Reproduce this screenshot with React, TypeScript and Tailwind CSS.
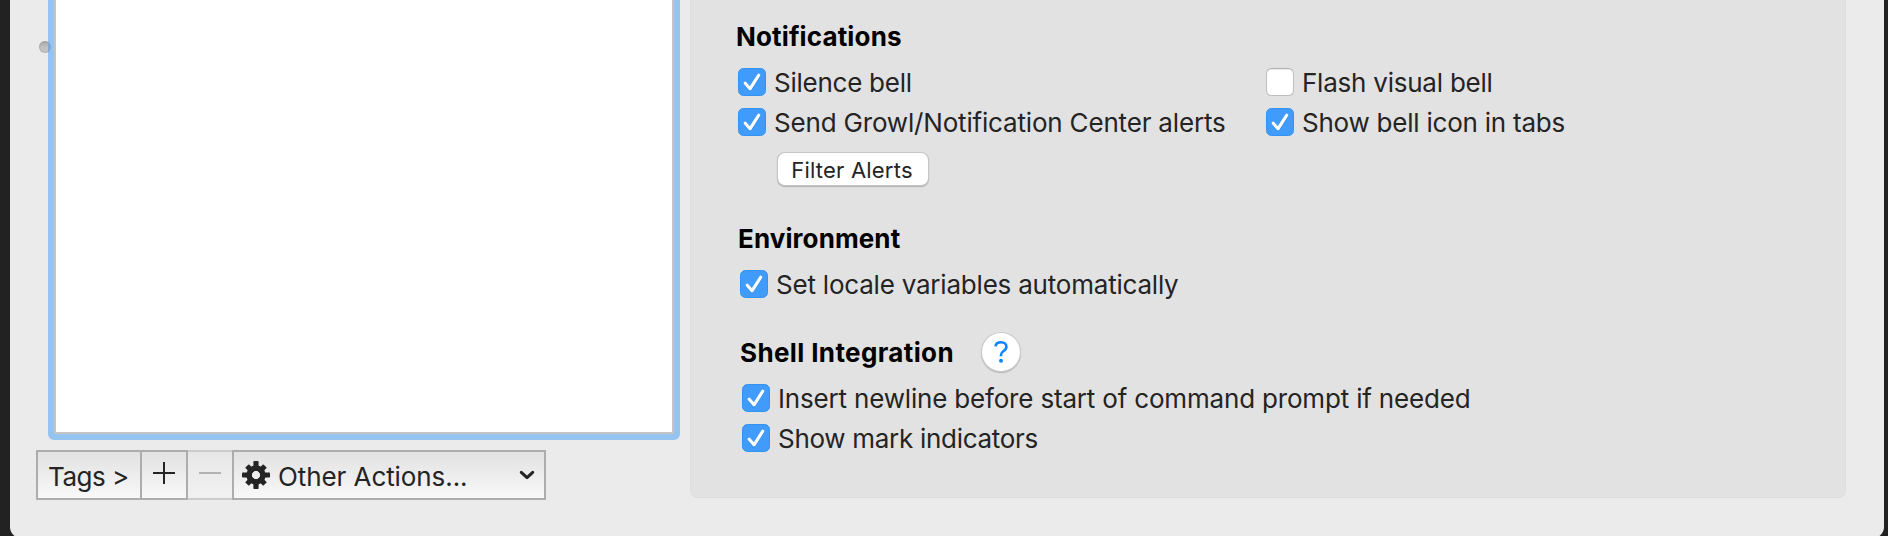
import React from "react";

type CheckProps = {
  label: string;
  tracking: string;
  checked?: boolean;
};

function Check({ label, tracking, checked = true }: CheckProps) {
  return (
    <label className="flex h-[28px] items-center">
      {checked ? (
        <span className="h-[28px] w-[28px] shrink-0 rounded-[5.5px] border border-[#3392f4] bg-[#409bfa]">
          <svg viewBox="1 1 26 26" className="h-[26px] w-[26px] overflow-visible" fill="none" strokeLinecap="round" strokeLinejoin="round">
            <path d="M7.2 16.4 12 22 20.8 8.4" stroke="#2f83dc" strokeOpacity="0.6" strokeWidth="2.8" />
            <path d="M7.2 15.2 12 20.8 20.8 7.2" stroke="#fff" strokeWidth="3.1" />
          </svg>
        </span>
      ) : (
        <span className="h-[28px] w-[28px] shrink-0 rounded-[5.5px] border border-[#bfbfbf] border-t-[#b0b0b0] bg-white shadow-[inset_0_1px_1px_rgba(0,0,0,0.08)]" />
      )}
      <span className={`ml-[8px] pt-px text-[26px] leading-[28px] whitespace-nowrap text-[#242424] ${tracking}`}>{label}</span>
    </label>
  );
}

function Gear() {
  return (
    <svg viewBox="-14 -14 28 28" className="h-[28px] w-[28px]" fill="#242424">
      <mask id="hub" maskUnits="userSpaceOnUse" x="-15" y="-15" width="30" height="30">
        <rect x="-15" y="-15" width="30" height="30" fill="#fff" />
        <circle r="4.3" fill="#000" />
      </mask>
      {[0, 45, 90, 135].map((a) => (
        <rect key={a} x="-2.6" y={a % 90 ? -12.8 : -14} width="5.2" height={a % 90 ? 25.6 : 28} rx="0.8" transform={`rotate(${a})`} mask="url(#hub)" />
      ))}
      <circle r="7" fill="none" stroke="#242424" strokeWidth="5.4" />
    </svg>
  );
}

export default function App() {
  return (
    <div className="h-[536px] w-full overflow-hidden bg-[#222222] pr-[4px] pl-[10px] font-['Inter',sans-serif]">
      <div className="flex h-[538px] rounded-b-[11px] bg-[#ebebeb]">
        <div className="w-[680px] shrink-0">
          <div className="relative ml-[38px] h-[440px] w-[632px] rounded-b-[6px] bg-[#96c4f1] px-[6px] pb-[6px]">
            <div className="h-full border-x-2 border-b-2 border-[#c4c4c4] bg-white" />
            <span className="absolute top-[41px] left-[-9px] flex h-[12px] w-[12px] justify-end overflow-hidden rounded-full bg-linear-to-b from-[#a6a6a6] via-[#c0c0c0] to-[#c6c6c6] shadow-[inset_0_0_1px_1px_rgba(140,140,140,0.35)]">
              <span className="h-full w-[3px] bg-[#7fa9d3]" />
            </span>
          </div>
          <div className="mt-[10px] ml-[26px] flex h-[50px] text-[26px] leading-[46px] text-[#242424]">
            <button className="w-[106px] border-2 border-[#adadad] bg-linear-to-b from-[#e2e2e2] to-[#f8f8f8] pt-[3px] pl-[10px] text-left leading-[43px] tracking-[-0.5px]">
              Tags &gt;
            </button>
            <button className="flex w-[46px] border-y-2 border-r-2 border-[#adadad] bg-linear-to-b from-[#e2e2e2] to-[#f8f8f8] pt-[10px] pl-[11px]">
              <svg viewBox="0 0 22 22" className="h-[22px] w-[22px]" stroke="#242424" strokeWidth="2">
                <path d="M11 0V22M0 11H22" />
              </svg>
            </button>
            <button className="flex w-[44px] border-y-2 border-[#cccccc] bg-linear-to-b from-[#e7e7e7] to-[#f1f1f1] pt-[10px] pl-[11px]">
              <svg viewBox="0 0 22 22" className="h-[22px] w-[22px]" stroke="#b2b2b2" strokeWidth="2">
                <path d="M0 11H22" />
              </svg>
            </button>
            <button className="flex w-[314px] items-center border-2 border-[#adadad] bg-linear-to-b from-[#e2e2e2] to-[#f8f8f8] pl-[8px]">
              <Gear />
              <span className="ml-[8px] pt-[4px] leading-[42px] tracking-[-0.08px]">Other Actions...</span>
              <svg viewBox="0 0 16 10" className="mr-[9px] ml-auto h-[10px] w-[16px]" fill="none" stroke="#242424" strokeWidth="3" strokeLinecap="round" strokeLinejoin="round">
                <path d="M2.3 2.3 8 7.7 13.7 2.3" />
              </svg>
            </button>
          </div>
        </div>

        <div className="h-[498px] w-[1156px] rounded-b-[8px] border-x border-b border-[#dddddd] bg-[#e2e2e2] pl-[45px]">
          <h2 className="mt-[22px] h-[28px] pt-px text-[26px] leading-[28px] font-bold tracking-[0.14px] text-black">Notifications</h2>
          <div className="mt-[18px] ml-[2px] grid w-[900px] grid-cols-[528px_1fr] gap-y-[12px]">
            <Check label="Silence bell" tracking="tracking-[-0.25px]" />
            <Check label="Flash visual bell" tracking="tracking-[-0.23px]" checked={false} />
            <Check label="Send Growl/Notification Center alerts" tracking="tracking-[-0.18px]" />
            <Check label="Show bell icon in tabs" tracking="tracking-[-0.23px]" />
          </div>
          <button className="mt-[17px] ml-[42px] block h-[32px] w-[150px] rounded-[7px] bg-white pr-[2px] text-[22px] leading-[35px] tracking-[0.2px] text-[#242424] shadow-[0_0_0_1px_#c6c6c6,0_1px_1px_1px_#b0b0b0]">
            Filter Alerts
          </button>
          <h2 className="mt-[39px] ml-[2px] h-[28px] pt-px text-[26px] leading-[28px] font-bold tracking-[0.1px] text-black">Environment</h2>
          <div className="mt-[18px] ml-[4px]">
            <Check label="Set locale variables automatically" tracking="tracking-[-0.21px]" />
          </div>
          <div className="mt-[34px] ml-[4px] flex h-[40px] items-center">
            <h2 className="pt-px text-[26px] leading-[28px] font-bold tracking-[0.37px] text-black">Shell Integration</h2>
            <button className="ml-[28px] flex h-[38px] w-[38px] items-center justify-center rounded-full bg-white shadow-[0_0_0_1px_#cbcbcb,0_1px_1px_1px_#b4b4b4]">
              <svg viewBox="0 0 14 22" className="h-[22px] w-[14px]" fill="none" stroke="#0a84ff" strokeWidth="2.6">
                <path d="M1.5 5.4C1.8 2.7 4 1.3 7 1.3c3.2 0 5.4 1.8 5.4 4.4 0 2-1 3.1-2.8 4.3C7.7 11.2 7 12.2 7 14v1.2" />
                <circle cx="7" cy="19.8" r="2" fill="#0a84ff" stroke="none" />
              </svg>
            </button>
          </div>
          <div className="mt-[12px] ml-[6px] flex flex-col gap-[12px]">
            <Check label="Insert newline before start of command prompt if needed" tracking="tracking-[-0.18px]" />
            <Check label="Show mark indicators" tracking="tracking-[-0.29px]" />
          </div>
        </div>
      </div>
    </div>
  );
}
